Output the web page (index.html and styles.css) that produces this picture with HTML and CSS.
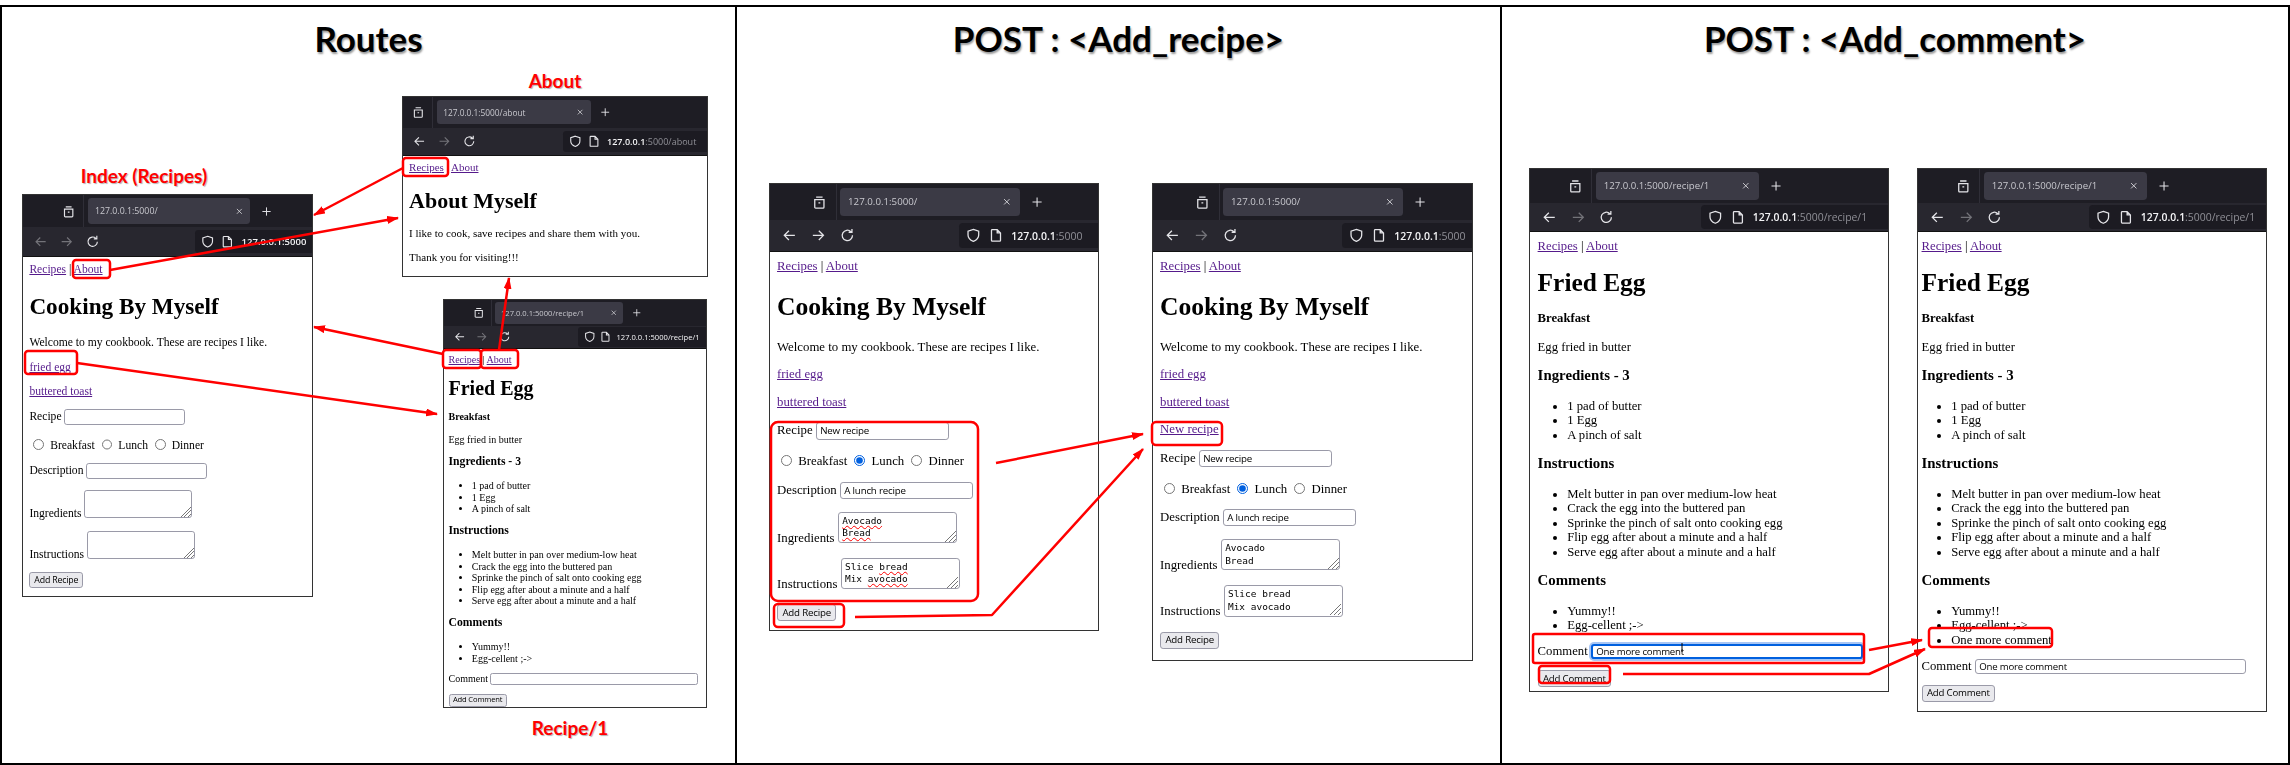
FILE: index.html
```
<!DOCTYPE html>
<html lang="en">
<head>
  <meta charset="UTF-8" />
  <title>Flask routes and POST forms</title>
  <link rel="stylesheet" href="styles.css">
</head>
<body>
  <svg class="defs" width="0" height="0">
    <symbol id="i-tabs" viewBox="0 0 16 16"><path d="M4.5 2.2h7M3 5h10v8.2a1 1 0 0 1-1 1H4a1 1 0 0 1-1-1zM7 8.6h2"/></symbol>
    <symbol id="i-x" viewBox="0 0 16 16"><path d="M3.5 3.5l9 9M12.5 3.5l-9 9"/></symbol>
    <symbol id="i-plus" viewBox="0 0 16 16"><path d="M8 2v12M2 8h12"/></symbol>
    <symbol id="i-back" viewBox="0 0 16 16"><path d="M14 8H2.5M7.5 3l-5 5 5 5"/></symbol>
    <symbol id="i-fwd" viewBox="0 0 16 16"><path d="M2 8h11.5M8.5 3l5 5-5 5"/></symbol>
    <symbol id="i-reload" viewBox="0 0 16 16"><path d="M13.6 8a5.6 5.6 0 1 1-1.7-4M13 1v3.6H9.4"/></symbol>
    <symbol id="i-shield" viewBox="0 0 16 16"><path d="M8 1.5l5.8 1.9v4.2c0 3.2-2.4 5.6-5.8 6.9-3.4-1.3-5.8-3.7-5.8-6.9V3.4z"/></symbol>
    <symbol id="i-page" viewBox="0 0 16 16"><path d="M3.5 1.8h5.4l3.6 3.6v8.1a.8.8 0 0 1-.8.8H3.500a.8.8 0 0 1-.8-.8V2.600a.8.8 0 0 1 .8-.8zM8.900 1.800v3.600h3.600"/></symbol>
  </svg>

  <main class="slide">

    <section class="panel panel-routes">
      <h1 class="title">Routes</h1>
      <div class="tag tag-about">About</div>
      <div class="tag tag-index">Index (Recipes)</div>
      <div class="tag tag-recipe">Recipe/1</div>

      <div class="win win-about">
        <div class="tabs">
          <div class="rail"><svg class="ico"><use href="#i-tabs"/></svg></div>
          <div class="tab"><span>127.0.0.1:5000/about</span><svg class="ico ico-x"><use href="#i-x"/></svg></div>
          <svg class="ico ico-plus"><use href="#i-plus"/></svg>
        </div>
        <div class="bar">
          <div class="btns">
            <svg class="ico"><use href="#i-back"/></svg>
            <svg class="ico off"><use href="#i-fwd"/></svg>
            <svg class="ico"><use href="#i-reload"/></svg>
          </div>
          <div class="url"><svg class="ico"><use href="#i-shield"/></svg><svg class="ico"><use href="#i-page"/></svg><span>127.0.0.1<span class="dim">:5000/about</span></span></div>
        </div>
        <div class="page">
          <div class="nav"><a href="#">Recipes</a> | <a href="#">About</a></div>
          <h2>About Myself</h2>
          <p>I like to cook, save recipes and share them with you.</p>
          <p>Thank you for visiting!!!</p>
        </div>
      </div>

      <div class="win win-index">
        <div class="tabs">
          <div class="rail"><svg class="ico"><use href="#i-tabs"/></svg></div>
          <div class="tab"><span>127.0.0.1:5000/</span><svg class="ico ico-x"><use href="#i-x"/></svg></div>
          <svg class="ico ico-plus"><use href="#i-plus"/></svg>
        </div>
        <div class="bar">
          <div class="btns">
            <svg class="ico off"><use href="#i-back"/></svg>
            <svg class="ico off"><use href="#i-fwd"/></svg>
            <svg class="ico"><use href="#i-reload"/></svg>
          </div>
          <div class="url"><svg class="ico"><use href="#i-shield"/></svg><svg class="ico"><use href="#i-page"/></svg><span>127.0.0.1:5000</span></div>
        </div>
        <div class="page">
          <div class="nav"><a href="#">Recipes</a> | <a href="#">About</a></div>
          <h2>Cooking By Myself</h2>
          <p>Welcome to my cookbook. These are recipes I like.</p>
          <p><a href="#">fried egg</a></p>
          <p><a href="#">buttered toast</a></p>
          <p>Recipe <input class="txt" type="text"></p>
          <p class="opts"><input type="radio"> Breakfast <input type="radio"> Lunch <input type="radio"> Dinner</p>
          <p>Description <input class="txt" type="text"></p>
          <p>Ingredients <span class="ta"></span></p>
          <p>Instructions <span class="ta"></span></p>
          <p><button class="btn">Add Recipe</button></p>
        </div>
      </div>

      <div class="win win-small">
        <div class="tabs">
          <div class="rail"><svg class="ico"><use href="#i-tabs"/></svg></div>
          <div class="tab"><span>127.0.0.1:5000/recipe/1</span><svg class="ico ico-x"><use href="#i-x"/></svg></div>
          <svg class="ico ico-plus"><use href="#i-plus"/></svg>
        </div>
        <div class="bar">
          <div class="btns">
            <svg class="ico"><use href="#i-back"/></svg>
            <svg class="ico off"><use href="#i-fwd"/></svg>
            <svg class="ico"><use href="#i-reload"/></svg>
          </div>
          <div class="url"><svg class="ico"><use href="#i-shield"/></svg><svg class="ico"><use href="#i-page"/></svg><span>127.0.0.1:5000/recipe/1</span></div>
        </div>
        <div class="page recipe">
          <div class="nav"><a href="#">Recipes</a> | <a href="#">About</a></div>
          <h2>Fried Egg</h2>
          <h4>Breakfast</h4>
          <p>Egg fried in butter</p>
          <h3>Ingredients - 3</h3>
          <ul><li>1 pad of butter</li><li>1 Egg</li><li>A pinch of salt</li></ul>
          <h3>Instructions</h3>
          <ul>
            <li>Melt butter in pan over medium-low heat</li>
            <li>Crack the egg into the buttered pan</li>
            <li>Sprinke the pinch of salt onto cooking egg</li>
            <li>Flip egg after about a minute and a half</li>
            <li>Serve egg after about a minute and a half</li>
          </ul>
          <h3>Comments</h3>
          <ul><li>Yummy!!</li><li>Egg-cellent ;-&gt;</li></ul>
          <p class="row">Comment <input class="txt txt-wide" type="text"></p>
          <p><button class="btn">Add Comment</button></p>
        </div>
      </div>
    </section>

    <section class="panel panel-recipe">
      <h1 class="title">POST : &lt;Add_recipe&gt;</h1>
      <div class="wins">
        <div class="win win-before">
          <div class="tabs">
            <div class="rail"><svg class="ico"><use href="#i-tabs"/></svg></div>
            <div class="tab"><span>127.0.0.1:5000/</span><svg class="ico ico-x"><use href="#i-x"/></svg></div>
            <svg class="ico ico-plus"><use href="#i-plus"/></svg>
          </div>
          <div class="bar">
            <div class="btns">
              <svg class="ico"><use href="#i-back"/></svg>
              <svg class="ico"><use href="#i-fwd"/></svg>
              <svg class="ico"><use href="#i-reload"/></svg>
            </div>
            <div class="url"><svg class="ico"><use href="#i-shield"/></svg><svg class="ico"><use href="#i-page"/></svg><span>127.0.0.1<span class="dim">:5000</span></span></div>
          </div>
          <div class="page">
            <div class="nav"><a href="#">Recipes</a> | <a href="#">About</a></div>
            <h2>Cooking By Myself</h2>
            <p>Welcome to my cookbook. These are recipes I like.</p>
            <p><a href="#">fried egg</a></p>
            <p><a href="#">buttered toast</a></p>
            <p>Recipe <input class="txt" type="text" value="New recipe"></p>
            <p class="opts"><input type="radio"> Breakfast <input type="radio" checked> Lunch <input type="radio"> Dinner</p>
            <p>Description <input class="txt" type="text" value="A lunch recipe"></p>
            <p>Ingredients <span class="ta"><span class="bad">Avocado</span><br><span class="bad">Bread</span></span></p>
            <p>Instructions <span class="ta">Slice <span class="bad">bread</span><br>Mix <span class="bad">avocado</span></span></p>
            <p><button class="btn">Add Recipe</button></p>
          </div>
        </div>

        <div class="win win-after">
          <div class="tabs">
            <div class="rail"><svg class="ico"><use href="#i-tabs"/></svg></div>
            <div class="tab"><span>127.0.0.1:5000/</span><svg class="ico ico-x"><use href="#i-x"/></svg></div>
            <svg class="ico ico-plus"><use href="#i-plus"/></svg>
          </div>
          <div class="bar">
            <div class="btns">
              <svg class="ico"><use href="#i-back"/></svg>
              <svg class="ico off"><use href="#i-fwd"/></svg>
              <svg class="ico"><use href="#i-reload"/></svg>
            </div>
            <div class="url"><svg class="ico"><use href="#i-shield"/></svg><svg class="ico"><use href="#i-page"/></svg><span>127.0.0.1<span class="dim">:5000</span></span></div>
          </div>
          <div class="page">
            <div class="nav"><a href="#">Recipes</a> | <a href="#">About</a></div>
            <h2>Cooking By Myself</h2>
            <p>Welcome to my cookbook. These are recipes I like.</p>
            <p><a href="#">fried egg</a></p>
            <p><a href="#">buttered toast</a></p>
            <p><a href="#">New recipe</a></p>
            <p>Recipe <input class="txt" type="text" value="New recipe"></p>
            <p class="opts"><input type="radio"> Breakfast <input type="radio" checked> Lunch <input type="radio"> Dinner</p>
            <p>Description <input class="txt" type="text" value="A lunch recipe"></p>
            <p>Ingredients <span class="ta">Avocado<br>Bread</span></p>
            <p>Instructions <span class="ta">Slice bread<br>Mix avocado</span></p>
            <p><button class="btn">Add Recipe</button></p>
          </div>
        </div>
      </div>
    </section>

    <section class="panel panel-comment">
      <h1 class="title">POST : &lt;Add_comment&gt;</h1>
      <div class="wins">
        <div class="win win-form">
          <div class="tabs">
            <div class="rail"><svg class="ico"><use href="#i-tabs"/></svg></div>
            <div class="tab"><span>127.0.0.1:5000/recipe/1</span><svg class="ico ico-x"><use href="#i-x"/></svg></div>
            <svg class="ico ico-plus"><use href="#i-plus"/></svg>
          </div>
          <div class="bar">
            <div class="btns">
              <svg class="ico"><use href="#i-back"/></svg>
              <svg class="ico off"><use href="#i-fwd"/></svg>
              <svg class="ico"><use href="#i-reload"/></svg>
            </div>
            <div class="url"><svg class="ico"><use href="#i-shield"/></svg><svg class="ico"><use href="#i-page"/></svg><span>127.0.0.1<span class="dim">:5000/recipe/1</span></span></div>
          </div>
          <div class="page recipe">
            <div class="nav"><a href="#">Recipes</a> | <a href="#">About</a></div>
            <h2>Fried Egg</h2>
            <h4>Breakfast</h4>
            <p>Egg fried in butter</p>
            <h3>Ingredients - 3</h3>
            <ul><li>1 pad of butter</li><li>1 Egg</li><li>A pinch of salt</li></ul>
            <h3>Instructions</h3>
            <ul>
              <li>Melt butter in pan over medium-low heat</li>
              <li>Crack the egg into the buttered pan</li>
              <li>Sprinke the pinch of salt onto cooking egg</li>
              <li>Flip egg after about a minute and a half</li>
              <li>Serve egg after about a minute and a half</li>
            </ul>
            <h3>Comments</h3>
            <ul><li>Yummy!!</li><li>Egg-cellent ;-&gt;</li></ul>
            <p class="row">Comment <input class="txt txt-wide focus" type="text" value="One more comment"></p>
            <p><button class="btn">Add Comment</button></p>
          </div>
        </div>

        <div class="win win-done">
          <div class="tabs">
            <div class="rail"><svg class="ico"><use href="#i-tabs"/></svg></div>
            <div class="tab"><span>127.0.0.1:5000/recipe/1</span><svg class="ico ico-x"><use href="#i-x"/></svg></div>
            <svg class="ico ico-plus"><use href="#i-plus"/></svg>
          </div>
          <div class="bar">
            <div class="btns">
              <svg class="ico"><use href="#i-back"/></svg>
              <svg class="ico off"><use href="#i-fwd"/></svg>
              <svg class="ico"><use href="#i-reload"/></svg>
            </div>
            <div class="url"><svg class="ico"><use href="#i-shield"/></svg><svg class="ico"><use href="#i-page"/></svg><span>127.0.0.1<span class="dim">:5000/recipe/1</span></span></div>
          </div>
          <div class="page recipe">
            <div class="nav"><a href="#">Recipes</a> | <a href="#">About</a></div>
            <h2>Fried Egg</h2>
            <h4>Breakfast</h4>
            <p>Egg fried in butter</p>
            <h3>Ingredients - 3</h3>
            <ul><li>1 pad of butter</li><li>1 Egg</li><li>A pinch of salt</li></ul>
            <h3>Instructions</h3>
            <ul>
              <li>Melt butter in pan over medium-low heat</li>
              <li>Crack the egg into the buttered pan</li>
              <li>Sprinke the pinch of salt onto cooking egg</li>
              <li>Flip egg after about a minute and a half</li>
              <li>Serve egg after about a minute and a half</li>
            </ul>
            <h3>Comments</h3>
            <ul><li>Yummy!!</li><li>Egg-cellent ;-&gt;</li><li>One more comment</li></ul>
            <p class="row">Comment <input class="txt txt-wide" type="text" value="One more comment"></p>
            <p><button class="btn">Add Comment</button></p>
          </div>
        </div>
      </div>
    </section>
  </main>

  <!-- red callouts drawn on top of the screenshots -->
  <svg class="marks" viewBox="0 0 2290 765">
    <defs>
      <marker id="head" viewBox="0 0 12 8" refX="11" refY="4" markerWidth="12" markerHeight="8" markerUnits="userSpaceOnUse" orient="auto">
        <path d="M0 0L12 4L0 8z" fill="#f00"/>
      </marker>
    </defs>
    <path class="caret" d="M1682 643v9"/>

    <!-- routes -->
    <rect x="403" y="158" width="45" height="18" rx="3"/>
    <rect x="73" y="260" width="37" height="18" rx="3"/>
    <rect x="25" y="351" width="52" height="23" rx="3"/>
    <rect x="443" y="350" width="38" height="18" rx="3"/>
    <rect x="481" y="350" width="37" height="18" rx="3"/>
    <path d="M403 168L314 215" marker-end="url(#head)"/>
    <path d="M110 270L398 218" marker-end="url(#head)"/>
    <path d="M443 354L314 327" marker-end="url(#head)"/>
    <path d="M77 363L437 414" marker-end="url(#head)"/>
    <path d="M499 350L509 278" marker-end="url(#head)"/>

    <!-- add recipe -->
    <rect x="771" y="422" width="207" height="179" rx="7"/>
    <rect x="774" y="604" width="70" height="23" rx="4"/>
    <rect x="1152" y="422" width="70" height="23" rx="4"/>
    <path d="M996 463L1143 434" marker-end="url(#head)"/>
    <path d="M855 617L992 615L1143 449" marker-end="url(#head)"/>

    <!-- add comment -->
    <rect x="1533" y="634" width="331" height="29" rx="2"/>
    <rect x="1539" y="666" width="71" height="17" rx="3"/>
    <rect x="1929" y="628" width="123" height="19" rx="3"/>
    <path d="M1869 650L1922 640" marker-end="url(#head)"/>
    <path d="M1623 674L1869 674L1925 649" marker-end="url(#head)"/>
  </svg>
</body>
</html>
```

FILE: styles.css
```
body {
  margin: 0;
  width: 2290px;
  height: 765px;
  position: relative;
  overflow: hidden;
  background: #fff;
  color: #000;
  font-family: "Liberation Serif", serif;
}

.defs {
  position: absolute;
}

.slide {
  margin-top: 5px;
  height: 760px;
  box-sizing: border-box;
  border: 2px solid #000;
  display: grid;
  grid-template-columns: 733px 765px 1fr;
}

.panel + .panel {
  border-left: 2px solid #000;
}

.title {
  margin: 0;
  padding-top: 9px;
  height: 54px;
  box-sizing: border-box;
  line-height: 44px;
  text-align: center;
  font-family: Lato, sans-serif;
  font-size: 35px;
  font-weight: 700;
  text-shadow: 1px 2px 2px rgba(0, 0, 0, 0.4);
}

/* routes panel is a free canvas */
.panel-routes {
  position: relative;
}

.tag {
  position: absolute;
  width: 160px;
  text-align: center;
  font-family: Lato, sans-serif;
  font-size: 19px;
  font-weight: 700;
  line-height: 26px;
  color: #f00;
  text-shadow: 1px 1px 1px rgba(0, 0, 0, 0.3);
}

.tag-about { left: 473px; top: 61px; }
.tag-index { left: 62px; top: 156px; }
.tag-recipe { left: 488px; top: 708px; }

.panel-routes .win {
  position: absolute;
}

.wins {
  display: flex;
  align-items: flex-start;
}

.panel-recipe .wins {
  margin-top: 122px;
  padding-left: 32px;
  gap: 53px;
}

.panel-comment .wins {
  margin-top: 107px;
  padding-left: 27px;
  gap: 28px;
}

/* browser window, everything scales with its font-size */
.win {
  box-sizing: border-box;
  border: 1px solid #333;
  background: #fff;
  overflow: hidden;
  filter: blur(0.35px);
  --strip: 2.8em;
  --tool: 2.55em;
  --rail: 5.2em;
  --tab: 14em;
  --url: 14.8em;
  --pad: 0.55em;
  --gap: 1em;
}

.win-index { left: 20px; top: 187px; width: 291px; height: 403px; font-size: 11.6px; --rail: 5.3em; --gap: 0.95em; }
.win-about { left: 400px; top: 89px; width: 306px; height: 181px; font-size: 11px; --rail: 2.75em; --url: 14.5em; }
.win-small { left: 441px; top: 292px; width: 264px; height: 409px; font-size: 10px; --strip: 2.6em; --tool: 2.3em; --rail: 4.8em; --tab: 12.8em; --url: 13.4em; --pad: 0.45em; }
.win-before { width: 330px; height: 448px; font-size: 12.8px; }
.win-after { width: 321px; height: 478px; font-size: 12.8px; }
.win-form { width: 360px; height: 524px; font-size: 12.7px; --strip: 2.65em; --tool: 2.35em; --rail: 4.9em; --tab: 12.8em; --url: 13.5em; --pad: 0.6em; }
.win-done { width: 350px; height: 544px; font-size: 12.7px; --strip: 2.65em; --tool: 2.35em; --rail: 4.9em; --tab: 12.8em; --url: 13.5em; --pad: 0.28em; }

.tabs,
.bar {
  display: flex;
  align-items: center;
  color: #e4e4e8;
  font-family: "Open Sans", sans-serif;
}

.tabs {
  height: var(--strip);
  background: #1e1d24;
}

.rail {
  width: var(--rail);
  height: 100%;
  flex: none;
  box-sizing: border-box;
  padding-right: 0.7em;
  display: flex;
  align-items: center;
  justify-content: flex-end;
  border-right: 1px solid #2f2e37;
}

.tab {
  width: var(--tab);
  height: 2.2em;
  margin-left: 0.3em;
  box-sizing: border-box;
  padding: 0 0.6em;
  flex: none;
  display: flex;
  align-items: center;
  justify-content: space-between;
  background: #3b3a45;
  border-radius: 0.3em;
}

.tab span {
  font-size: 0.76em;
  color: #c8c8ce;
}

.ico {
  width: 1.15em;
  height: 1.15em;
  flex: none;
  fill: none;
  stroke: currentColor;
  stroke-width: 1.4;
}

.ico-x {
  width: 0.75em;
  height: 0.75em;
}

.ico-plus {
  width: 0.95em;
  height: 0.95em;
  margin-left: 0.9em;
}

.bar {
  height: var(--tool);
  background: #28272f;
  border-bottom: 1px solid #111;
  box-sizing: border-box;
}

.btns {
  width: var(--url);
  flex: none;
  box-sizing: border-box;
  padding-left: 0.95em;
  display: flex;
  gap: 1.1em;
}

.off {
  opacity: 0.4;
}

.url {
  flex: 1;
  height: 1.95em;
  min-width: 0;
  padding-left: 0.55em;
  display: flex;
  align-items: center;
  gap: 0.6em;
  background: #1c1b22;
  border-radius: 0.3em 0 0 0.3em;
  white-space: nowrap;
  font-weight: 600;
}

.url > span {
  font-size: 0.82em;
  color: #f4f4f6;
}

.win-small .url {
  font-weight: 400;
  gap: 0.5em;
}

.win-small .url > span {
  font-size: 0.76em;
}

.dim {
  color: #8f8f96;
  font-weight: 400;
}

.page {
  padding: 0.5em 0 0.5em var(--pad);
  line-height: 1.15;
}

.page h2 {
  font-size: 2em;
  margin: 0.72em 0;
}

.win-about .page h2 {
  margin: 0.64em 0;
}

.page p {
  margin: var(--gap) 0;
}

.page a {
  color: #551a8b;
}

.opts input {
  margin-left: 0.3em;
}

.recipe h2 {
  margin: 0.56em 0;
}

.recipe h4 {
  font-size: 1em;
  margin: 1.13em 0;
}

.recipe h3 {
  font-size: 1.17em;
  margin: 0.82em 0 1em;
}

.recipe ul {
  margin: 1.1em 0 0.88em;
  padding-left: 2.33em;
}

.win-small .recipe ul {
  margin: 1em 0 0.85em;
}

.recipe p {
  margin: 0.85em 0;
}

.row {
  white-space: nowrap;
}

.txt {
  width: 13.68em;
  height: 1.78em;
  padding: 0 0.35em;
  box-sizing: border-box;
  border: 1px solid #9a9aa8;
  border-radius: 0.32em;
  font-family: "Open Sans", sans-serif;
  font-size: 0.76em;
  letter-spacing: -0.02em;
  color: #000;
  outline: none;
}

.txt-wide {
  width: 28.15em;
  height: 1.58em;
}

.win-small .txt-wide {
  width: 27.37em;
}

.focus {
  border: 2px solid #0060df;
  box-shadow: 0 0 0 2px #a8c6f5;
}

.opts input[type="radio"] {
  width: 0.82em;
  height: 0.82em;
  accent-color: #0060df;
  vertical-align: -0.1em;
}

.ta {
  display: inline-block;
  overflow: hidden;
  width: 12.57em;
  height: 3.3em;
  margin-bottom: -0.16em;
  box-sizing: border-box;
  padding: 0.2em 0.35em;
  border: 1px solid #9a9aa8;
  border-radius: 0.33em;
  font-family: "DejaVu Sans Mono", monospace;
  font-size: 0.74em;
  line-height: 1.33;
  background: linear-gradient(135deg,
    transparent 50%, #777 50%, #777 55%, transparent 55%,
    transparent 66%, #777 66%, #777 71%, transparent 71%,
    transparent 82%, #777 82%, #777 87%, transparent 87%) no-repeat right bottom / 1.3em 1.3em;
}

.bad {
  text-decoration: underline wavy #f00 1px;
}

.btn {
  height: 1.78em;
  padding: 0 0.45em;
  box-sizing: border-box;
  border: 1px solid #9a9aa8;
  border-radius: 0.32em;
  background: #e9e9ed;
  font-family: "Open Sans", sans-serif;
  font-size: 0.76em;
  letter-spacing: -0.02em;
  line-height: 1;
  color: #000;
}

.marks {
  position: absolute;
  left: 0;
  top: 0;
  width: 2290px;
  height: 765px;
  pointer-events: none;
}

.marks rect,
.marks path {
  fill: none;
  stroke: #f00;
  stroke-width: 2.5;
  stroke-linejoin: round;
}

.marks marker path {
  fill: #f00;
  stroke: none;
}

.marks .caret {
  stroke: #000;
  stroke-width: 1;
}
```
